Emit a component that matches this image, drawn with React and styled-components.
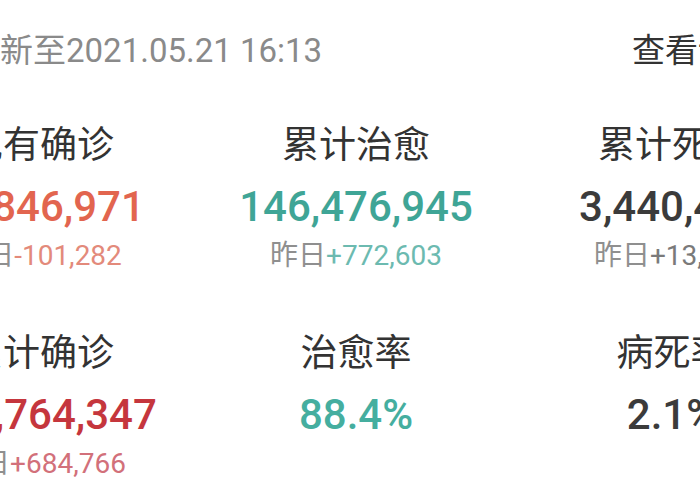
import React from 'react'
import styled, { createGlobalStyle } from 'styled-components'

const stats = [
  { label: '现有确诊', value: '15,846,971', delta: '-101,282', color: '#e2654f', soft: '#e38a7b' },
  { label: '累计治愈', value: '146,476,945', delta: '+772,603', color: '#3fa596', soft: '#6cbab0' },
  { label: '累计死亡', value: '3,440,431', delta: '+13,265', color: '#3b3b3b', soft: '#7a7a7a' },
  { label: '累计确诊', value: '165,764,347', delta: '+684,766', color: '#c5363d', soft: '#d2707a' },
  { label: '治愈率', value: '88.4%', color: '#45ae9f' },
  { label: '病死率', value: '2.1%', color: '#3b3b3b' },
]

const App = () => {
  return (
    <>
      <GlobalStyle />
      <Viewport>
        <Panel>
          <Header>
            <Updated>更新至2021.05.21 16:13</Updated>
            <More>查看详情</More>
          </Header>
          <Grid>
            {stats.map(s => (
              <Cell key={s.label}>
                <Label>{s.label}</Label>
                <Value $color={s.color}>{s.value}</Value>
                {s.delta && (
                  <Delta>
                    昨日<DeltaNum $color={s.soft}>{s.delta}</DeltaNum>
                  </Delta>
                )}
              </Cell>
            ))}
          </Grid>
        </Panel>
      </Viewport>
    </>
  )
}

export default App

const GlobalStyle = createGlobalStyle`
  body {
    margin: 0;
    background: #fff;
    font-family: Roboto, "Noto Sans CJK SC", sans-serif;
  }
`

const Viewport = styled.div`
  width: 700px;
  height: 500px;
  overflow: hidden;
  background: #fff;
`

const Panel = styled.div`
  width: 948px;
  margin-left: -118px;
`

const Header = styled.div`
  display: flex;
  justify-content: space-between;
  align-items: center;
  height: 96px;
  padding: 0 66px 0 85px;
  font-size: 33px;
  font-family: Roboto, "Noto Sans CJK SC", sans-serif;
`

const Updated = styled.span`
  color: #8a8a8a;
`

const More = styled.span`
  color: #333;
`

const Grid = styled.div`
  display: grid;
  grid-template-columns: repeat(3, 316px);
  row-gap: 57px;
  margin-top: 26px;
`

const Cell = styled.div`
  display: flex;
  flex-direction: column;
  align-items: center;
  height: 151px;
`

const Label = styled.div`
  font-family: "Noto Sans CJK SC", sans-serif;
  font-size: 37px;
  line-height: 40px;
  color: #333;
`

const Value = styled.div`
  margin-top: 20px;
  font-size: 42px;
  line-height: 50px;
  font-weight: 500;
  color: ${props => props.$color};
`

const Delta = styled.div`
  margin-top: 7px;
  font-size: 28px;
  line-height: 34px;
  color: #8f8f8f;
  font-family: Roboto, "Noto Sans CJK SC", sans-serif;
`

const DeltaNum = styled.span`
  color: ${props => props.$color};
`
